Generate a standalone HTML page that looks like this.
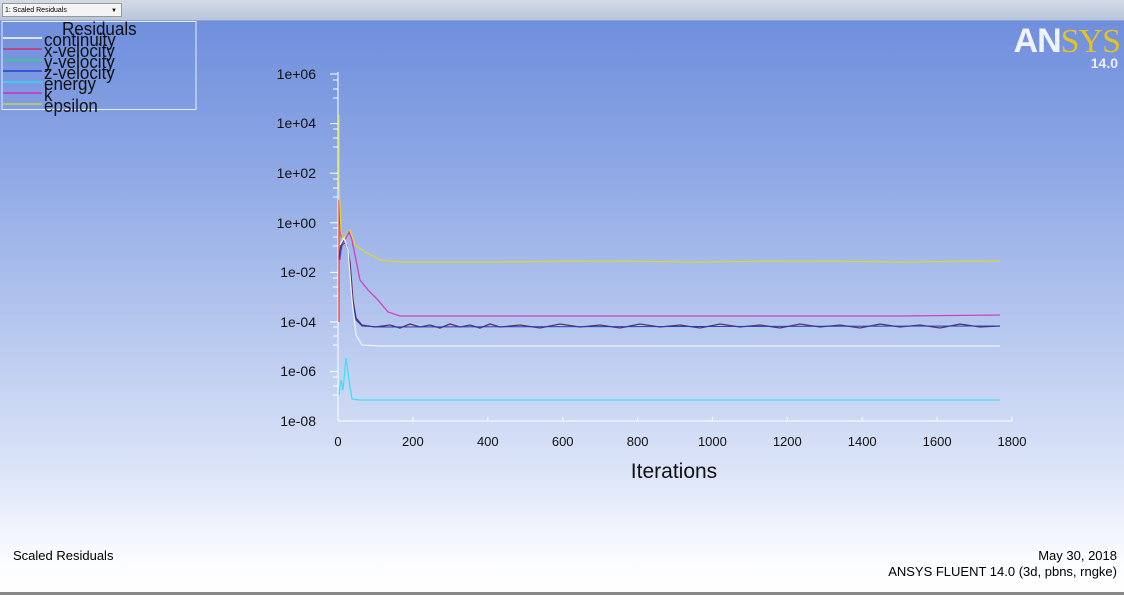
<!DOCTYPE html>
<html><head><meta charset="utf-8"><style>
body{margin:0;width:1124px;height:595px;overflow:hidden;font-family:"Liberation Sans",sans-serif;}
.bg{position:absolute;left:0;top:0;width:1124px;height:595px;background:linear-gradient(#6b8bdc 0px,#8aa5e4 150px,#b7c8ef 330px,#dbe4f8 470px,#fbfcff 560px,#fff 595px);}
.top{position:absolute;left:0;top:0;width:1124px;height:20px;background:linear-gradient(#d4dbe6,#b8c6dc);border-bottom:1px solid #8ea5cf}
.dd{position:absolute;left:2px;top:3px;width:120px;height:14px;background:#f4f4f4;border:1px solid #999;font-size:7px;line-height:14px;padding-left:2px;box-sizing:border-box}
.t{position:absolute;white-space:nowrap;color:#000}
</style></head><body>
<div class="bg"></div>
<div class="top"><div class="dd">1: Scaled Residuals<span style="position:absolute;right:4px;font-size:6px">▼</span></div></div>
<svg width="1124" height="595" style="position:absolute;left:0;top:0">
<rect x="2" y="21.5" width="194" height="88" fill="none" stroke="#e8eefc" stroke-width="1"/>
<g stroke-width="1.5">
<line x1="3" y1="38" x2="42" y2="38" stroke="#fff"/>
<line x1="3" y1="49" x2="42" y2="49" stroke="#d0306a"/>
<line x1="3" y1="60" x2="42" y2="60" stroke="#30d080"/>
<line x1="3" y1="71" x2="42" y2="71" stroke="#2040d0"/>
<line x1="3" y1="82" x2="42" y2="82" stroke="#30d8ff"/>
<line x1="3" y1="93" x2="42" y2="93" stroke="#d030c0"/>
<line x1="3" y1="104" x2="42" y2="104" stroke="#c8d060"/>
</g>
<g fill="#111" font-size="17" font-family="Liberation Sans" transform="scale(1,1.1)">
<text x="62" y="32">Residuals</text>
<text x="44" y="42">continuity</text>
<text x="44" y="52">x-velocity</text>
<text x="44" y="62">y-velocity</text>
<text x="44" y="72">z-velocity</text>
<text x="44" y="82">energy</text>
<text x="44" y="92">k</text>
<text x="44" y="102">epsilon</text>
</g>
<line x1="338" y1="72" x2="338" y2="421" stroke="#fff"/>
<line x1="338" y1="421" x2="1012" y2="421" stroke="#fff"/>
<g stroke="#fff" stroke-width="1">
<path d="M330 74h8M330 123.6h8M330 173.2h8M330 222.8h8M330 272.4h8M330 322h8M330 371.6h8M333 80h5M333 89h5M333 98h5M333 129h5M333 138h5M333 147h5M333 179h5M333 188h5M333 197h5M333 228h5M333 237h5M333 246h5M333 278h5M333 287h5M333 296h5M333 327h5M333 336h5M333 345h5M333 377h5M333 386h5M333 395h5"/>
<path d="M412.9 421v-4M487.8 421v-4M562.7 421v-4M637.6 421v-4M712.4 421v-4M787.3 421v-4M862.2 421v-4M937.1 421v-4M1012 421v-4"/>
</g>
<g fill="#111" font-size="14" font-family="Liberation Sans" text-anchor="end">
<text x="316" y="79">1e+06</text><text x="316" y="128">1e+04</text><text x="316" y="178">1e+02</text><text x="316" y="228">1e+00</text><text x="316" y="277">1e-02</text><text x="316" y="327">1e-04</text><text x="316" y="376">1e-06</text><text x="316" y="426">1e-08</text>
</g>
<g fill="#111" font-size="13" font-family="Liberation Sans" text-anchor="middle">
<text x="338" y="446">0</text><text x="412.9" y="446">200</text><text x="487.8" y="446">400</text><text x="562.7" y="446">600</text><text x="637.6" y="446">800</text><text x="712.4" y="446">1000</text><text x="787.3" y="446">1200</text><text x="862.2" y="446">1400</text><text x="937.1" y="446">1600</text><text x="1012" y="446">1800</text>
<text x="674" y="478" font-size="21">Iterations</text>
</g>
<g fill="none" stroke-width="1.3">
<path d="M339 322L339 200L341 236L345 240" stroke="#e04040"/>
<path d="M339 115L339 180L341 230L343 240L346 235L350 230L355 245L365 252L380 260L400 262L500 262L600 261L700 262L800 261L900 262L1000 261" stroke="#d8d830"/>
<path d="M340 260L341 250L343 242L346 238L349 232L352 240L356 260L360 280L368 290L378 300L388 312L400 316L500 316L700 316L900 316L1000 315" stroke="#d040c0"/>
<path d="M339 258L341 245L344 240L347 246L350 262L353 300L356 318L362 325L375 327L390 325L400 328L410 324L420 327L430 325L440 328L450 324L460 327L470 325L480 328L490 324L500 327L520 325L540 328L560 324L580 327L600 325L620 328L640 324L660 327L680 325L700 328L720 324L740 327L760 325L780 328L800 324L820 327L840 325L860 328L880 324L900 327L920 325L940 328L960 324L980 327L1000 326" stroke="#603060"/>
<path d="M339 260L342 245L345 243L348 250L352 300L356 320L362 326L380 327L1000 326" stroke="#2040c0" stroke-width="1"/>
<path d="M340 245L344 238L348 250L352 300L356 335L362 345L380 346L600 346L800 346L1000 346" stroke="#f0f0f0"/>
<path d="M339 395L341 380L343 390L346 358L349 380L352 399L360 400L500 400L700 400L900 400L1000 400" stroke="#40e0f0"/>
</g>
</svg>
<div class="t" style="right:4px;top:22px;font:bold 34px 'Liberation Sans',sans-serif;letter-spacing:-1px"><span style="color:#f0f3ff">AN</span><span style="color:#e8c020;font-family:'Liberation Serif',serif;font-weight:normal">SYS</span></div>
<div class="t" style="right:6px;top:55px;font:bold 14px 'Liberation Sans',sans-serif;color:#eef">14.0</div>
<div class="t" style="left:13px;top:548px;font-size:13px">Scaled Residuals</div>
<div class="t" style="right:7px;top:548px;font-size:13px">May 30, 2018</div>
<div class="t" style="right:7px;top:564px;font-size:13px">ANSYS FLUENT 14.0 (3d, pbns, rngke)</div>
<div style="position:absolute;left:0;top:592px;width:1124px;height:3px;background:#888"></div>
</body></html>
